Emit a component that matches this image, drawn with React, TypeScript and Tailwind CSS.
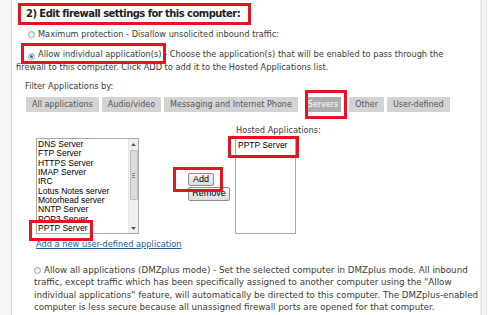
import React from "react";

function Radio({ on = false }: { on?: boolean }) {
  return (
    <span className="inline-flex items-center justify-center w-[7px] h-[7px] rounded-full border border-[#a0a0a0] bg-gradient-to-b from-[#e8e8e8] to-[#fafafa] align-[-0.5px] mr-[3px]">
      {on && <span className="w-[3px] h-[3px] rounded-full bg-[#2a5fb0]" />}
    </span>
  );
}

const items = [
  "DNS Server",
  "FTP Server",
  "HTTPS Server",
  "IMAP Server",
  "IRC",
  "Lotus Notes server",
  "Motorhead server",
  "NNTP Server",
  "POP3 Server",
  "PPTP Server",
];

function Tab({ label, active = false }: { label: string; active?: boolean }) {
  return (
    <div
      className={
        active
          ? "h-[15px] px-[3px] flex items-center bg-[#adadad] text-white"
          : "h-[15px] px-[6px] flex items-center bg-[#d3d3d3] text-[#555]"
      }
    >
      {label}
    </div>
  );
}

export default function App() {
  return (
    <div className="relative w-[490px] h-[315px] overflow-hidden bg-white flex font-['DejaVu_Sans',sans-serif] text-[8.25px] text-[#3a3a3a]">
      <div className="w-[12px] shrink-0 bg-[#f6f6f6] border-r border-[#e0e0e0]" />
      <div className="flex-1 flex flex-col pl-[4px]">
        <div className="pt-[6px] pl-[10px] leading-[15px] text-[10px] tracking-[-0.55px] font-bold text-[#222]">
          2) Edit firewall settings for this computer:
        </div>
        <div className="mt-[7px] pl-[12px] leading-[12px]">
          <Radio />
          Maximum protection - Disallow unsolicited inbound traffic:
        </div>
        <div className="mt-[8px] w-[444px] leading-[13px] indent-[12px]">
          <Radio on />
          Allow individual application(s) - Choose the application(s) that will be enabled to pass through the firewall to this computer. Click ADD to add it to the Hosted Applications list.
        </div>
        <div className="mt-[6px] pl-[9px] leading-[12px]">Filter Applications by:</div>
        <div className="mt-[5px] pl-[10px] flex gap-[3px] text-[8px]">
          <Tab label="All applications" />
          <Tab label="Audio/video" />
          <Tab label="Messaging and Internet Phone" />
          <div className="ml-[4px] mr-[5px]">
            <Tab label="Servers" active />
          </div>
          <Tab label="Other" />
          <Tab label="User-defined" />
        </div>
        <div className="flex items-start">
          <div className="w-[123px] shrink-0 pl-[20px] pt-[26px] flex flex-col">
            <div className="relative w-[103px] h-[96px] border border-[#a8a8a8] bg-white overflow-hidden flex">
              <div className="flex-1 pl-[1px] pt-[1px] font-['Liberation_Sans',Arial,sans-serif] text-[8.5px] leading-[9.33px] text-black">
                {items.map((it) => (
                  <div key={it}>{it}</div>
                ))}
              </div>
              <div className="w-[10px] shrink-0 bg-[#f0f0f0] border-l border-[#e6e6e6] flex flex-col items-center">
                <div className="h-[10px] flex items-center justify-center">
                  <svg width="5" height="3" viewBox="0 0 5 3"><path d="M0 3 L2.5 0 L5 3 Z" fill="#555" /></svg>
                </div>
                <div className="mt-[1px] w-[8px] h-[50px] bg-[#dcdcdc] border border-[#bdbdbd] rounded-[1px] flex flex-col items-center justify-center gap-[1px]">
                  <div className="w-[3px] h-[1px] bg-[#888]" />
                  <div className="w-[3px] h-[1px] bg-[#888]" />
                  <div className="w-[3px] h-[1px] bg-[#888]" />
                </div>
                <div className="flex-1" />
                <div className="h-[10px] flex items-center justify-center">
                  <svg width="5" height="3" viewBox="0 0 5 3"><path d="M0 0 L2.5 3 L5 0 Z" fill="#555" /></svg>
                </div>
              </div>
            </div>
            <div className="mt-[5px] leading-[11px] text-[#1a5ca6] underline whitespace-nowrap">
              Add a new user-defined application
            </div>
          </div>
          <div className="ml-[49px] pt-[61px] flex flex-col items-start gap-[1px] font-['Liberation_Sans',Arial,sans-serif] text-[9px] text-black">
            <div className="h-[13px] w-[26px] flex items-center justify-center border border-[#8e8e8e] rounded-[2px] bg-gradient-to-b from-[#f6f6f6] to-[#dcdcdc]">
              Add
            </div>
            <div className="h-[14px] w-[42px] flex items-center justify-center border border-[#8e8e8e] rounded-[2px] bg-gradient-to-b from-[#f6f6f6] to-[#dcdcdc]">
              Remove
            </div>
          </div>
          <div className="ml-[5px] pt-[13px] flex flex-col">
            <div className="ml-[1px] leading-[11px] whitespace-nowrap">Hosted Applications:</div>
            <div className="mt-[1px] w-[61px] h-[97px] border border-[#a8a8a8] bg-white pl-[2px] pt-[3px] font-['Liberation_Sans',Arial,sans-serif] text-[8.5px] leading-[9.33px] text-black">
              PPTP Server
            </div>
          </div>
        </div>
        <div className="mt-[14px] pl-[18px] w-[464px] text-[8.7px] leading-[12.3px]">
          <Radio />
          Allow all applications (DMZplus mode) - Set the selected computer in DMZplus mode. All inbound traffic, except traffic which has been specifically assigned to another computer using the "Allow individual applications" feature, will automatically be directed to this computer. The DMZplus-enabled computer is less secure because all unassigned firewall ports are opened for that computer.
        </div>
      </div>
      <div className="w-[14px] shrink-0 flex">
        <div className="w-[1px] bg-[#ededed]" />
        <div className="w-[6px] bg-[#f4f4f4] border-x border-[#e6e6e6]" />
        <div className="flex-1 bg-white" />
      </div>

      <div className="absolute left-[18px] top-[3px] w-[233px] h-[22px] border-[3px] border-[#e5141f]" />
      <div className="absolute left-[21px] top-[43px] w-[145px] h-[21px] border-[3px] border-[#e5141f]" />
      <div className="absolute left-[305px] top-[90px] w-[42px] h-[29px] border-[3px] border-[#e5141f]" />
      <div className="absolute left-[29px] top-[220px] w-[64px] h-[21px] border-[3px] border-[#e5141f]" />
      <div className="absolute left-[173px] top-[167px] w-[50px] h-[25px] border-[3px] border-[#e5141f]" />
      <div className="absolute left-[228px] top-[136px] w-[71px] h-[22px] border-[3px] border-[#e5141f]" />
    </div>
  );
}
